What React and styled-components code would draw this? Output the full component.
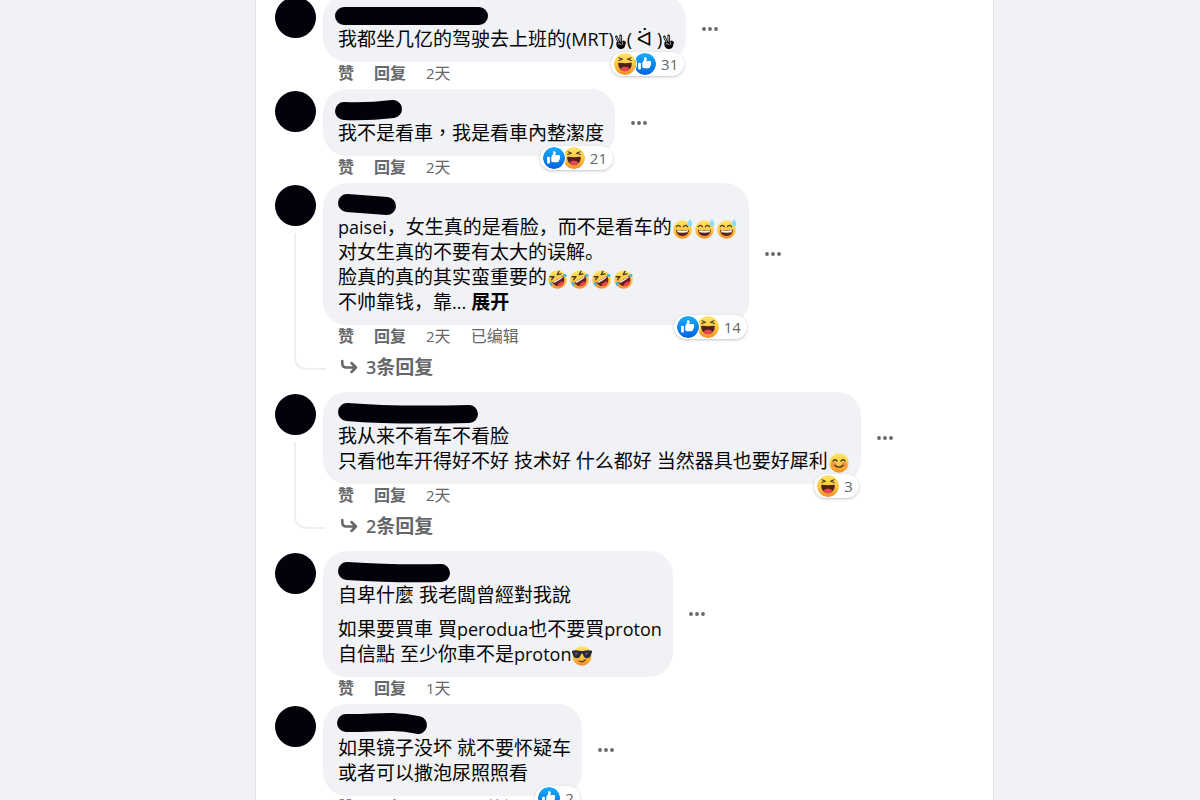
import React from "react";
import styled, { createGlobalStyle } from "styled-components";

const latin = '"Open Sans", "Noto Sans"';

const GlobalStyle = createGlobalStyle`
  * { box-sizing: border-box; }
  body {
    margin: 0;
    background: #f0f2f5;
    color: #050505;
    font-family: ${latin}, "Noto Sans CJK SC", sans-serif;
    scrollbar-width: none;
  }
  button { font: inherit; color: inherit; background: none; border: 0; padding: 0; cursor: pointer; }
  a { color: inherit; text-decoration: none; }
`;

const Page = styled.div`
  display: grid;
  grid-template-columns: 256fr 738fr 206fr;
  height: 100vh;
  overflow: hidden;
`;

const Feed = styled.main`
  grid-column: 2;
  background: #fff;
  border: solid #dddfe3;
  border-width: 0 1px 0 0;
  box-shadow: -1px 0 0 #dddfe3;
  overflow: hidden;
`;

const CommentList = styled.ul`
  list-style: none;
  margin: -5px 0 0;
  padding: 0 16px 0 19px;
`;

const CommentItem = styled.li`
  display: flex;
  gap: 7px;
  margin-bottom: 5px;
`;

const AvatarColumn = styled.div`
  display: flex;
  flex-direction: column;
  flex: none;
  width: 41px;
  padding-top: 2px;
`;

const Avatar = styled.div`
  flex: none;
  width: 41px;
  height: 41px;
  border-radius: 50%;
  background: #02020a;
`;

const ThreadLine = styled.div`
  flex: 1;
  width: 32px;
  margin: 7px 0 17px 19px;
  border: solid #edeff2;
  border-width: 0 0 2px 2px;
  border-bottom-left-radius: 12px;
`;

const Content = styled.div`
  min-width: 0;
`;

const BubbleRow = styled.div`
  display: flex;
  align-items: center;
  gap: 8px;
`;

const Bubble = styled.div`
  position: relative;
  padding: 10px 11px 10px 15px;
  border-radius: 24px;
  background: #f0f2f5;
`;

const Redaction = styled.svg`
  display: block;
  height: 22px;
  overflow: visible;
  fill: none;
  stroke: #02020a;
  stroke-width: 18px;
  stroke-linecap: round;
`;

const Paragraph = styled.p`
  margin: 0;
  font-family: ${latin}, ${(p) => (p.$traditional ? '"Noto Sans CJK TC"' : '"Noto Sans CJK SC"')}, sans-serif;
  font-size: 19px;
  line-height: 25px;
  & + & { margin-top: 9px; }
`;

const Line = styled.span`
  display: block;
  height: 25px;
  white-space: nowrap;
`;

const Latin = styled.span`
  font-size: 18px;
`;

const Symbol = styled.span`
  font-family: "DejaVu Sans", sans-serif;
  font-size: 20px;
  line-height: 20px;
`;

const VictoryIcon = styled.svg`
  width: 13px;
  height: 16px;
  vertical-align: -4px;
`;

const ExpandButton = styled.button`
  font-weight: 700;
`;

const InlineEmoji = styled.svg`
  width: 20px;
  height: 20px;
  margin: 0 1px;
  vertical-align: -5px;
  overflow: visible;
`;

const ReactionPill = styled.button`
  && {
    position: absolute;
    right: 2px;
    bottom: -14px;
    display: flex;
    align-items: center;
    height: 24px;
    padding: 0 6px 0 3px;
    border-radius: 12px;
    background: #fff;
    box-shadow: 0 1px 3px rgba(0, 0, 0, 0.24);
    color: #65676b;
    font-size: 15px;
    line-height: 24px;
  }
`;

const ReactionIcon = styled.svg`
  position: relative;
  z-index: ${(p) => p.$order};
  width: 22px;
  height: 22px;
  border-radius: 50%;
  box-shadow: 0 0 0 1px #fff;
  & + & { margin-left: -2px; }
`;

const ReactionCount = styled.span`
  padding-left: 5px;
`;

const MoreButton = styled.button`
  flex: none;
  display: flex;
  align-items: center;
  justify-content: center;
  width: 32px;
  height: 32px;
`;

const Actions = styled.div`
  display: flex;
  align-items: center;
  gap: 20px;
  height: 22px;
  padding-left: 15px;
  color: #65676b;
  font-size: 16px;
  line-height: 22px;
`;

const ActionButton = styled.button`
  font-weight: 700;
`;

const Digit = styled.span`
  font-size: 15px;
`;

const RepliesButton = styled.button`
  && {
    display: flex;
    align-items: center;
    gap: 7px;
    height: 40px;
    padding-left: 17px;
    color: #65676b;
    font-size: 19px;
    font-weight: 700;
    line-height: 25px;
  }
`;

const ReplyCount = styled.span`
  font-size: 18px;
  font-weight: 600;
`;

function Gradients() {
  return (
    <svg width="0" height="0" style={{ display: "block" }} aria-hidden="true">
      <defs>
        <linearGradient id="face" x1="0" y1="0" x2="0" y2="1">
          <stop offset="0" stopColor="#ffe667" />
          <stop offset="0.55" stopColor="#fdc63f" />
          <stop offset="1" stopColor="#f28a25" />
        </linearGradient>
        <linearGradient id="blue" x1="0" y1="0" x2="0" y2="1">
          <stop offset="0" stopColor="#18affe" />
          <stop offset="1" stopColor="#0062df" />
        </linearGradient>
      </defs>
    </svg>
  );
}

function Haha({ order }) {
  return (
    <ReactionIcon $order={order} viewBox="0 0 22 22" role="img" aria-label="哈哈">
      <circle cx="11" cy="11" r="11" fill="url(#face)" />
      <path d="M5 4.800 8.400 6.300 4.800 7.500M17 4.800 13.600 6.300l3.600 1.200" fill="none" stroke="#4b3a26" strokeWidth="1.200" strokeLinecap="round" strokeLinejoin="round" />
      <path d="M4.200 10.600c0-.8.500-1 1.300-.9 3.500.6 7.500.6 11 0 .8-.1 1.300.1 1.300.9 0 4-2.800 7.600-6.800 7.600s-6.800-3.600-6.800-7.600z" fill="#50201b" />
      <path d="M6.700 15.800c1-1.500 2.600-2 4.300-2s3.300.5 4.300 2c-1.200 1.500-2.600 2.400-4.300 2.400s-3.100-.9-4.300-2.400z" fill="#f0405a" />
    </ReactionIcon>
  );
}

function Like({ order }) {
  return (
    <ReactionIcon $order={order} viewBox="0 0 16 16" role="img" aria-label="赞">
      <circle cx="8" cy="8" r="8" fill="url(#blue)" />
      <path
        d="M12.162 7.338c.176.123.338.245.338.674 0 .43-.229.604-.474.725.1.163.132.360.089.546-.077.344-.392.611-.672.690.121.194.159.385.015.620-.185.295-.346.407-1.058.407H7.500c-.988 0-1.500-.546-1.500-1V7.665c0-1.230 1.467-2.275 1.467-3.130L7.361 3.470c-.005-.065.008-.224.058-.270.080-.079.301-.200.635-.200.218 0 .363.041.534.123.581.277.732.978.732 1.542 0 .271-.414 1.083-.470 1.364 0 0 .867-.192 1.879-.199 1.061-.006 1.749.190 1.749.842 0 .261-.219.523-.316.666zM3.600 7h.800a.600.600 0 0 1 .600.600v3.800a.600.600 0 0 1-.600.600h-.800a.600.600 0 0 1-.600-.600V7.600a.600.600 0 0 1 .600-.600z"
        fill="#fff"
      />
    </ReactionIcon>
  );
}

function Victory() {
  return (
    <VictoryIcon viewBox="0 0 13 16" role="img" aria-label="✌">
      <path d="M2.300 2.800 5.200 9M6.600 1.800 7 8.500" fill="none" stroke="#050505" strokeWidth="2.400" strokeLinecap="round" />
      <path d="M2.500 3.300 5 8.500M6.600 2.400 6.900 8" fill="none" stroke="#f0f2f5" strokeWidth=".8" strokeLinecap="round" />
      <path d="M2.200 9.200C2.500 7.800 4 7.500 5.500 8l3-.8c.6-1 1.900-1 2.200.1.900 0 1.300.7 1.100 1.600l-.9 3.400c-.5 1.800-1.800 2.700-3.900 2.700-2.600 0-4-1.300-4.500-3.500z" fill="#050505" />
      <path d="M4 9.800c1.400-.4 2.700.1 3.200 1.200M8.300 8.600l.5 1.600" fill="none" stroke="#f0f2f5" strokeWidth=".8" strokeLinecap="round" />
    </VictoryIcon>
  );
}

function Sweat() {
  return (
    <InlineEmoji viewBox="0 0 20 20" role="img" aria-label="😅">
      <circle cx="9.500" cy="10.500" r="9.300" fill="url(#face)" />
      <path d="M3.300 7.600c1-1.600 3-1.600 4 0M10.500 7.600c1-1.600 3-1.600 4 0" fill="none" stroke="#493522" strokeWidth="1.300" strokeLinecap="round" />
      <path d="M3.100 10.800c4 .7 8.800.7 12.800 0 0 3.800-2.700 6.200-6.400 6.200s-6.400-2.400-6.400-6.200z" fill="#55231b" />
      <path d="M4 11.300c3.500.5 7.500.5 11 0l-.4 2c-3.200.5-7 .5-10.200 0z" fill="#fff" />
      <path d="M17 0c1.400 2 2.500 3.600 2.300 5.300-.2 1.500-1.300 2.300-2.500 2.200-1.300-.1-2.200-1.100-2.100-2.500.1-1.600 1.200-3.200 2.300-5z" fill="#8bdcf4" />
    </InlineEmoji>
  );
}

function Rofl() {
  return (
    <InlineEmoji viewBox="0 0 20 20" role="img" aria-label="🤣">
      <circle cx="9.500" cy="10.500" r="9.300" fill="url(#face)" />
      <g transform="rotate(-32 10 10.500)">
        <path d="M4.800 4 8.200 6 4.500 7.300M15.200 4 11.800 6 15.500 7.300" fill="none" stroke="#493522" strokeWidth="1.300" strokeLinecap="round" strokeLinejoin="round" />
        <path d="M3.600 9.700c4 .7 8.800.7 12.800 0 0 4.300-2.700 7.500-6.400 7.500s-6.400-3.200-6.400-7.500z" fill="#6b1f1c" />
        <path d="M4.600 10.100c3.400.5 7.400.5 10.800 0l-.3 1.200c-3.200.4-7 .4-10.200 0z" fill="#fff" />
        <path d="M6.300 15.300c2-1.800 5.400-1.800 7.400 0-1 1.300-2.300 2-3.700 2s-2.700-.7-3.700-2z" fill="#ef4058" />
        <path d="M3.600 9C1.700 8.900.2 9.700.4 11.200c.2 1.300 1.900 1.600 2.600.4.300-.7.500-1.700.6-2.600zM16.400 9c1.900-.1 3.400.7 3.200 2.200-.2 1.300-1.900 1.600-2.600.4-.3-.7-.5-1.700-.6-2.600z" fill="#35b9ee" />
      </g>
    </InlineEmoji>
  );
}

function Smile() {
  return (
    <InlineEmoji viewBox="0 0 20 20" role="img" aria-label="😊">
      <circle cx="10" cy="10" r="9.700" fill="url(#face)" />
      <circle cx="4.600" cy="11.500" r="2.600" fill="#f9713d" opacity=".6" />
      <circle cx="15.400" cy="11.500" r="2.600" fill="#f9713d" opacity=".6" />
      <path d="M4 8.100c1-1.900 3-1.900 4 0M12 8.100c1-1.900 3-1.900 4 0M6 12.200c2 2.600 6 2.600 8 0" fill="none" stroke="#4d3823" strokeWidth="1.400" strokeLinecap="round" />
    </InlineEmoji>
  );
}

function Cool() {
  return (
    <InlineEmoji viewBox="0 0 20 20" role="img" aria-label="😎">
      <circle cx="10" cy="10" r="9.700" fill="url(#face)" />
      <path d="M0 4.800c3-.9 6-.7 8.500.3h3c2.500-1 5.500-1.200 8.500-.3v2c-.8.400-.8 1.300-1.200 2.700-.6 2-1.800 2.700-3.700 2.700-2.500 0-3.600-1.800-4.200-4.200-.2-.7-1.600-.7-1.800 0-.6 2.400-1.700 4.200-4.200 4.200-1.900 0-3.100-.7-3.700-2.700C.8 8.100.8 7.200 0 6.800z" fill="#262a38" />
      <path d="M3 6.700 6.500 6.500l-2.800 3.600zM13 6.700l3.500-.2-2.800 3.600z" fill="#76506f" />
      <path d="M7 15c2.500 1.200 5 .7 6.600-1.300" fill="none" stroke="#633b1a" strokeWidth="1.300" strokeLinecap="round" />
    </InlineEmoji>
  );
}

function Comment({ redaction, reactions, count, age, edited, replies, children }) {
  return (
    <CommentItem>
      <AvatarColumn>
        <Avatar />
        {replies && <ThreadLine />}
      </AvatarColumn>
      <Content>
        <BubbleRow>
          <Bubble>
            <Redaction width="40" aria-hidden="true">
              <path d={redaction} />
            </Redaction>
            {children}
            {reactions && (
              <ReactionPill>
                {reactions.map((Icon, i) => (
                  <Icon key={i} order={reactions.length - i} />
                ))}
                <ReactionCount>{count}</ReactionCount>
              </ReactionPill>
            )}
          </Bubble>
          <MoreButton aria-label="更多">
            <svg width="16" height="4" viewBox="0 0 16 4" fill="#65676b" aria-hidden="true">
              <circle cx="2" cy="2" r="1.900" />
              <circle cx="8" cy="2" r="1.900" />
              <circle cx="14" cy="2" r="1.900" />
            </svg>
          </MoreButton>
        </BubbleRow>
        <Actions>
          <ActionButton>赞</ActionButton>
          <ActionButton>回复</ActionButton>
          <a href="#time"><Digit>{age}</Digit>天</a>
          {edited && <span>已编辑</span>}
        </Actions>
        {replies && (
          <RepliesButton>
            <svg width="19" height="16" viewBox="0 0 19 16" fill="none" stroke="#65676b" strokeWidth="2.500" strokeLinecap="round" strokeLinejoin="round" aria-hidden="true">
              <path d="M2.300 2v2.500Q2.300 8.500 6.500 8.500H16M11.500 4 16 8.500 11.500 13" />
            </svg>
            <span><ReplyCount>{replies}</ReplyCount>条回复</span>
          </RepliesButton>
        )}
      </Content>
    </CommentItem>
  );
}

export default function App() {
  return (
    <>
      <GlobalStyle />
      <Gradients />
      <Page>
        <Feed>
          <CommentList>
            <Comment redaction="M6 11H141" reactions={[Haha, Like]} count="31" age="2">
              <Paragraph lang="zh-Hans">
                <Line>
                  我都坐几亿的驾驶去上班的<Latin>(MRT)</Latin><Victory /><Latin>( <Symbol>ᐛ</Symbol> )</Latin><Victory />
                </Line>
              </Paragraph>
            </Comment>

            <Comment redaction="M6 12Q30 13 55 10" reactions={[Like, Haha]} count="21" age="2">
              <Paragraph $traditional lang="zh-Hant">
                <Line>我不是看車，我是看車內整潔度</Line>
              </Paragraph>
            </Comment>

            <Comment redaction="M9 10L49 13" reactions={[Like, Haha]} count="14" age="2" edited replies="3">
              <Paragraph lang="zh-Hans">
                <Line><Latin>paisei</Latin>，女生真的是看脸，而不是看车的<Sweat /><Sweat /><Sweat /></Line>
                <Line>对女生真的不要有太大的误解。</Line>
                <Line>脸真的真的其实蛮重要的<Rofl /><Rofl /><Rofl /><Rofl /></Line>
                <Line>不帅靠钱，靠<Latin>...</Latin> <ExpandButton>展开</ExpandButton></Line>
              </Paragraph>
            </Comment>

            <Comment redaction="M9 10C45 13 90 13 131 12" reactions={[Haha]} count="3" age="2" replies="2">
              <Paragraph lang="zh-Hans">
                <Line>我从来不看车不看脸</Line>
                <Line>只看他车开得好不好 技术好 什么都好 当然器具也要好犀利<Smile /></Line>
              </Paragraph>
            </Comment>

            <Comment redaction="M9 10C40 12 70 13 103 12" age="1">
              <Paragraph $traditional lang="zh-Hant">
                <Line>自卑什麼 我老闆曾經對我說</Line>
              </Paragraph>
              <Paragraph $traditional lang="zh-Hant">
                <Line>如果要買車 買<Latin>perodua</Latin>也不要買<Latin>proton</Latin></Line>
                <Line>自信點 至少你車不是<Latin>proton</Latin><Cool /></Line>
              </Paragraph>
            </Comment>

            <Comment redaction="M8 9C35 10 50 5 80 11" reactions={[Like]} count="2" age="2" edited>
              <Paragraph lang="zh-Hans">
                <Line>如果镜子没坏 就不要怀疑车</Line>
                <Line>或者可以撒泡尿照照看</Line>
              </Paragraph>
            </Comment>
          </CommentList>
        </Feed>
      </Page>
    </>
  );
}
